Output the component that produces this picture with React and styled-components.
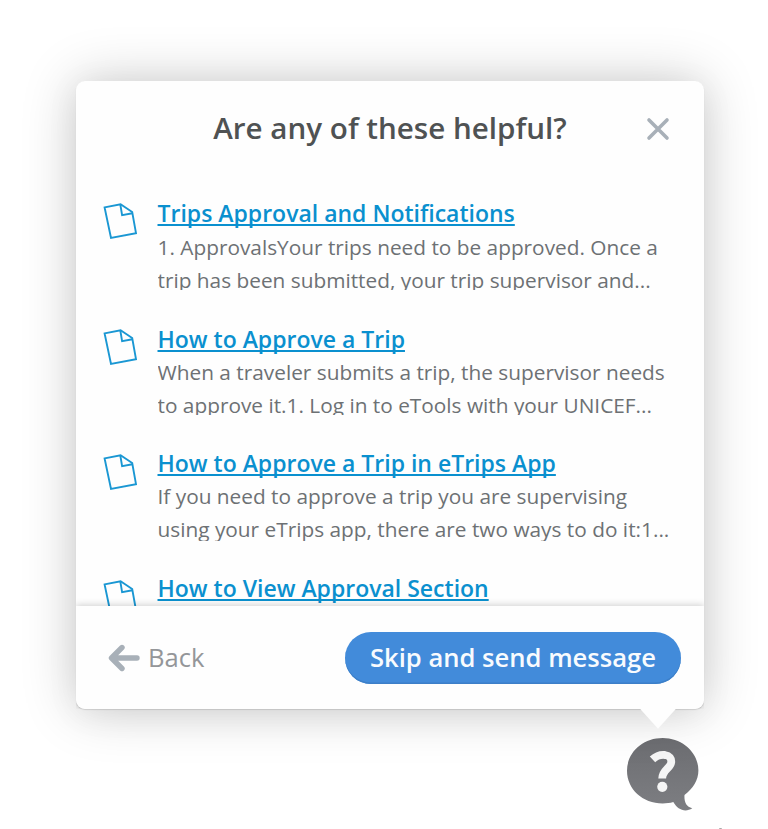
import React from 'react';
import styled, { createGlobalStyle } from 'styled-components';

const Global = createGlobalStyle`
  body { margin: 0; background: #fff; font-family: "Open Sans", sans-serif; }
  * { box-sizing: border-box; }
`;

const Page = styled.main`
  position: relative;
  height: 829px;
  padding: 81px 64px 0 76px;
  overflow: hidden;
`;

const Card = styled.section`
  position: relative;
  display: flex;
  flex-direction: column;
  width: 628px;
  height: 628px;
  border-radius: 9px;
  background: #fefefe;
  box-shadow: 0 0 56px rgba(0, 0, 0, 0.2), 0 4px 34px rgba(0, 0, 0, 0.06), 0 1px 1px rgba(0, 0, 0, 0.12);
`;

const Header = styled.header`
  position: relative;
  flex: none;
  height: 116px;
  padding-top: 27px;
`;

const Title = styled.h1`
  margin: 0;
  font-size: 29.6px;
  font-weight: 600;
  line-height: 40px;
  text-align: center;
  white-space: nowrap;
  color: #4f5253;
`;

const CloseButton = styled.button`
  position: absolute;
  top: 36px;
  right: 34px;
  width: 24px;
  height: 24px;
  padding: 0;
  border: 0;
  background: none;
  color: #a8b0b8;
  svg { display: block; }
`;

const Results = styled.div`
  flex: 1;
  min-height: 0;
  overflow: hidden;
`;

const Item = styled.article`
  display: flex;
  gap: 19.5px;
  height: ${(p) => p.$height}px;
  padding-left: 26px;
`;

const DocSvg = styled.svg`
  flex: none;
  margin-top: ${(p) => p.$top}px;
`;

const ItemText = styled.div`
  flex: none;
`;

const ItemLink = styled.a`
  display: block;
  font-size: 23px;
  font-weight: 600;
  line-height: 32px;
  white-space: nowrap;
  color: #0a90cf;
  text-decoration: underline;
  text-decoration-thickness: 2px;
  text-underline-offset: 2px;
  text-decoration-skip-ink: none;
`;

const Excerpt = styled.p`
  margin: 1px 0 0;
  padding-top: ${(p) => p.$shift || 0}px;
  height: ${(p) => p.$height}px;
  overflow: hidden;
  font-size: 20.82px;
  line-height: 33px;
  white-space: pre;
  color: #6d7174;
`;

const Footer = styled.footer`
  position: relative;
  display: flex;
  flex: none;
  align-items: flex-start;
  justify-content: space-between;
  height: 103px;
  padding: 26px 23px 0 32px;
  border-radius: 0 0 9px 9px;
  background: #fefefe;
  box-shadow: 0 -1px 7px rgba(0, 0, 0, 0.19);
  clip-path: inset(-12px 0 0 0);
`;

const BackButton = styled.button`
  display: flex;
  align-items: center;
  gap: 8px;
  height: 52px;
  padding: 0;
  border: 0;
  background: none;
  font: 400 25.6px/52px "Open Sans", sans-serif;
  color: #949699;
`;

const SkipButton = styled.button`
  width: 336px;
  height: 52px;
  padding: 0;
  border: 0;
  border-radius: 26px;
  background: #428bda;
  box-shadow: inset 0 -1.5px 0 #3c7fc8;
  font: 600 25.6px/52px "Open Sans", sans-serif;
  white-space: nowrap;
  color: #f8fbfe;
`;

const Pointer = styled.svg`
  position: absolute;
  top: 627px;
  left: 564px;
`;

const Beacon = styled.svg`
  display: block;
  margin: 27px 0 0 549px;
`;

const Speck = styled.span`
  position: absolute;
  left: 719px;
  bottom: 0;
  width: 3px;
  height: 1.5px;
  border-radius: 2px 2px 0 0;
  background: #aaa;
`;

function DocIcon({ top }) {
  return (
    <DocSvg $top={top} width="36" height="38" viewBox="0 0 36 38" fill="none" stroke="#1a97d3" strokeWidth="1.9">
      <path d="M2.600 5.400 18.600 2.200 30.200 10 34 31.200 9 36Z" />
      <path d="M18.300 2.400 20.100 13.200 30.400 11.200" />
    </DocSvg>
  );
}

const results = [
  { title: 'Trips Approval and Notifications', text: '1. ApprovalsYour trips need to be approved. Once a\ntrip has been submitted, your trip supervisor and...', height: 126, clip: 60, icon: 5, shift: 1 },
  { title: 'How to Approve a Trip', text: 'When a traveler submits a trip, the supervisor needs\nto approve it.1. Log in to eTools with your UNICEF...', height: 124, clip: 59, icon: 5 },
  { title: 'How to Approve a Trip in eTrips App', text: 'If you need to approve a trip you are supervising\nusing your eTrips app, there are two ways to do it:1...', height: 125, clip: 61, icon: 6 },
  { title: 'How to View Approval Section', height: 125, icon: 7 },
];

export default function App() {
  return (
    <Page>
      <Global />
      <Card>
        <Header>
          <Title>Are any of these helpful?</Title>
          <CloseButton aria-label="Close">
            <svg width="24" height="24" viewBox="0 0 24 24" stroke="currentColor" strokeWidth="3.6" strokeLinecap="round">
              <path d="M3 3 21 21M21 3 3 21" />
            </svg>
          </CloseButton>
        </Header>
        <Results>
          {results.map((r) => (
            <Item key={r.title} $height={r.height}>
              <DocIcon top={r.icon} />
              <ItemText>
                <ItemLink>{r.title}</ItemLink>
                {r.text && <Excerpt $height={r.clip} $shift={r.shift}>{r.text}</Excerpt>}
              </ItemText>
            </Item>
          ))}
        </Results>
        <Footer>
          <BackButton>
            <svg width="32" height="28" viewBox="0 0 32 28" fill="none" stroke="#a8b0b8" strokeWidth="5.4" strokeLinecap="round" strokeLinejoin="round">
              <path d="M14 3.500 3.500 14 14 24.500M4 14H29" />
            </svg>
            Back
          </BackButton>
          <SkipButton>Skip and send message</SkipButton>
        </Footer>
        <Pointer width="36" height="22" viewBox="0 0 36 22">
          <path d="M0 0H36V.8L18 20.800 0 .8Z" fill="#fefefe" />
        </Pointer>
      </Card>
      <Beacon width="76" height="76" viewBox="0 0 76 76">
        <defs>
          <linearGradient id="bubble" x1="0" y1="0" x2="0" y2="1">
            <stop offset="0" stopColor="#6c6d71" />
            <stop offset="1" stopColor="#7d7e82" />
          </linearGradient>
        </defs>
        <path d="M37.700 2C57.500 2 73.400 16.500 73.400 34.500C73.400 44 68 52.500 59.500 59C59 65.500 61 71 67.300 72.300C60 77 52.500 73.500 48.300 66C45 67 41.500 67.400 37.700 67.400C17.500 67.400 2 53 2 34.700C2 16.500 17.500 2 37.700 2Z" fill="url(#bubble)" />
        <path d="M27.500 23.400C31.500 19.600 36 18.600 40 19C44.500 19.600 46.600 22.500 46.200 26.300C45.500 32.500 37.200 34 37.200 42.500" fill="none" stroke="#f5f5f5" strokeWidth="7.8" />
        <circle cx="37.300" cy="50.800" r="5.100" fill="#f5f5f5" />
      </Beacon>
      <Speck />
    </Page>
  );
}
